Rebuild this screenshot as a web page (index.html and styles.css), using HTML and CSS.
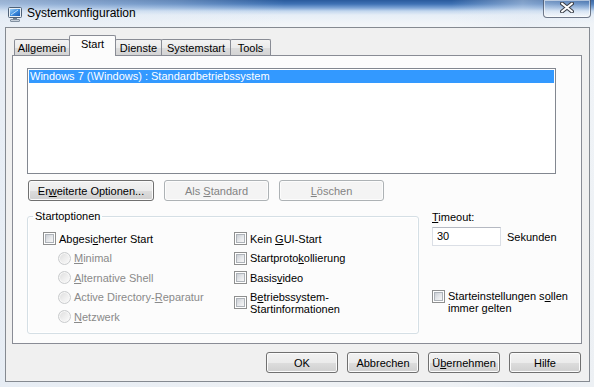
FILE: index.html
```html
<!DOCTYPE html>
<html lang="de">
<head>
  <meta charset="UTF-8">
  <title>Systemkonfiguration</title>
  <link rel="stylesheet" href="styles.css">
</head>
<body>
  <div class="window">
    <div class="titlebar">
      <svg class="app-icon" width="16" height="16" viewBox="0 0 16 16">
        <defs>
          <linearGradient id="scr" x1="0" y1="0" x2="1" y2="1">
            <stop offset="0" stop-color="#9fd0f7"/>
            <stop offset="0.5" stop-color="#3d8ee0"/>
            <stop offset="1" stop-color="#1b5bb5"/>
          </linearGradient>
        </defs>
        <rect x="1.5" y="1.5" width="13" height="10" rx="1" fill="#e8eef4" stroke="#4f6278"/>
        <rect x="3" y="3" width="10" height="7" fill="url(#scr)"/>
        <path d="M4 9 L11 4" stroke="#dff1ff" stroke-width="1" opacity="0.8"/>
        <rect x="6" y="12" width="4" height="1.5" fill="#6c7c8e"/>
        <rect x="3.5" y="13.5" width="9" height="2" rx="0.5" fill="#c9d2dc" stroke="#6c7c8e" stroke-width="0.8"/>
      </svg>
      <span class="title">Systemkonfiguration</span>
      <div class="close-btn">
        <svg width="14" height="11" viewBox="0 0 14 11">
          <path d="M2 1.5 L12 9.5 M12 1.5 L2 9.5" stroke="#3b3f47" stroke-width="4" stroke-linecap="round"/>
          <path d="M2 1.5 L12 9.5 M12 1.5 L2 9.5" stroke="#ffffff" stroke-width="2" stroke-linecap="round"/>
        </svg>
      </div>
    </div>

    <div class="client">
      <div class="tabs">
        <div class="tab tab-allgemein">Allgemein</div>
        <div class="tab tab-start active">Start</div>
        <div class="tab tab-dienste">Dienste</div>
        <div class="tab tab-systemstart">Systemstart</div>
        <div class="tab tab-tools">Tools</div>
      </div>

      <div class="panel">
        <div class="listbox">
          <div class="list-item selected">Windows 7 (\Windows) : Standardbetriebssystem</div>
        </div>

        <div class="list-buttons">
          <button class="btn btn-wide">Er<u>w</u>eiterte Optionen...</button>
          <button class="btn btn-mid" disabled>Als <u>S</u>tandard</button>
          <button class="btn btn-mid" disabled><u>L</u>öschen</button>
        </div>

        <div class="options-row">
          <fieldset class="groupbox">
            <legend>Startoptionen</legend>
            <div class="opt-grid">
              <div class="opt-col">
                <label class="opt"><span class="check"></span><span>Abgesi<u>c</u>herter Start</span></label>
                <label class="opt sub disabled"><span class="radio"></span><span><u>M</u>inimal</span></label>
                <label class="opt sub disabled"><span class="radio"></span><span><u>A</u>lternative Shell</span></label>
                <label class="opt sub disabled"><span class="radio"></span><span>Active Directory-<u>R</u>eparatur</span></label>
                <label class="opt sub disabled"><span class="radio"></span><span><u>N</u>etzwerk</span></label>
              </div>
              <div class="opt-col">
                <label class="opt"><span class="check"></span><span>Kein <u>G</u>UI-Start</span></label>
                <label class="opt"><span class="check"></span><span>Startproto<u>k</u>ollierung</span></label>
                <label class="opt"><span class="check"></span><span>Basis<u>v</u>ideo</span></label>
                <label class="opt multi"><span class="check"></span><span>B<u>e</u>triebssystem-<br>Startinformationen</span></label>
              </div>
            </div>
          </fieldset>

          <div class="timeout-col">
            <div class="timeout-label"><u>T</u>imeout:</div>
            <div class="timeout-row">
              <div class="textbox">30</div>
              <span>Sekunden</span>
            </div>
            <label class="opt persist"><span class="check"></span><span>Starteinstellungen s<u>o</u>llen<br>immer gelten</span></label>
          </div>
        </div>
      </div>

      <div class="dialog-buttons">
        <button class="btn btn-dlg">OK</button>
        <button class="btn btn-dlg">Abbrechen</button>
        <button class="btn btn-dlg">Ü<u>b</u>ernehmen</button>
        <button class="btn btn-dlg">Hilfe</button>
      </div>
    </div>
  </div>
</body>
</html>
```

FILE: styles.css
```css
body {
  margin: 0;
  width: 594px;
  height: 387px;
  overflow: hidden;
  background: #eef2f6;
  font-family: "Liberation Sans", Arial, sans-serif;
  font-size: 11px;
  color: #000;
}
.window {
  height: 387px;
  background:
    linear-gradient(to right, rgba(226,234,244,0.6) 0, rgba(226,234,244,0.3) 30%, rgba(226,234,244,0) 48%, rgba(226,234,244,0) 76%, rgba(226,234,244,0.45) 88%, rgba(226,234,244,0.1) 100%),
    linear-gradient(to bottom, #295a9c 0, #3f72b4 4px, #7fa6d6 8px, #c3d7ee 11px, #e6eef7 15px, #f2f5f8 24px, #eef1f4 100%);
}
.titlebar {
  display: flex;
  align-items: flex-start;
  height: 27px;
}
.app-icon {
  margin: 6px 0 0 7px;
}
.title {
  margin: 6px 0 0 4px;
  font-size: 12px;
  line-height: 15px;
}
.close-btn {
  margin-left: auto;
  margin-right: 3px;
  width: 48px;
  height: 18px;
  box-sizing: border-box;
  border: 1px solid rgba(70,80,100,0.75);
  border-top: none;
  border-radius: 0 0 4px 4px;
  box-shadow: inset 0 0 0 1px rgba(255,255,255,0.55);
  background: linear-gradient(to bottom, rgba(255,255,255,0.05), rgba(255,255,255,0.35));
  display: flex;
  align-items: center;
  justify-content: center;
}
.close-btn svg {
  margin-top: -2px;
}

/* Client-Bereich */
.client {
  margin: 0 4px 0 5px;
  height: 355px;
  box-sizing: border-box;
  border: 1px solid #858a91;
  background: #f0f0f0;
  padding-top: 7px;
}
.tabs {
  display: flex;
  align-items: flex-end;
  height: 20px;
  margin-left: 8px;
  position: relative;
  z-index: 1;
}
.tab {
  box-sizing: border-box;
  height: 16px;
  border: 1px solid #898c95;
  border-bottom: none;
  margin-left: -1px;
  background: linear-gradient(to bottom, #f3f3f3 0, #ebebeb 50%, #dddddd 51%, #d4d4d4 100%);
  text-align: center;
  line-height: 16px;
  border-radius: 2px 2px 0 0;
}
.tab:first-child {
  margin-left: 0;
}
.tab.active {
  height: 21px;
  margin-bottom: -1px;
  background: #fcfcfc;
  line-height: 17px;
}
.tab-allgemein { width: 56px; }
.tab-start { width: 47px; }
.tab-dienste { width: 47px; }
.tab-systemstart { width: 70px; }
.tab-tools { width: 41px; }

.panel {
  margin-left: 6px;
  width: 570px;
  height: 289px;
  box-sizing: border-box;
  border: 1px solid #898c95;
  background: #fcfcfc;
  padding-top: 12px;
}
.listbox {
  margin-left: 14px;
  width: 529px;
  height: 106px;
  box-sizing: border-box;
  border: 1px solid #828790;
  background: #fff;
  padding: 1px;
}
.list-item {
  height: 13px;
  line-height: 13px;
  padding-left: 1px;
  white-space: nowrap;
}
.list-item.selected {
  background: #3399ff;
  color: #fff;
}

/* Buttons */
.btn {
  box-sizing: border-box;
  height: 21px;
  padding: 0;
  font-family: inherit;
  font-size: 11px;
  color: #000;
  border: 1px solid #707070;
  border-radius: 3px;
  background: linear-gradient(to bottom, #f2f2f2 0, #ebebeb 50%, #dddddd 51%, #cfcfcf 100%);
  box-shadow: inset 0 0 0 1px #fbfbfb;
}
.btn:disabled {
  color: #838383;
  border-color: #adb2b5;
  background: #f4f4f4;
  box-shadow: inset 0 0 0 1px #fcfcfc;
}
.btn u {
  text-underline-offset: 1px;
}
.list-buttons {
  display: flex;
  gap: 10px;
  margin: 6px 0 0 15px;
}
.btn-wide { width: 126px; }
.btn-mid { width: 105px; }

/* Startoptionen */
.options-row {
  display: flex;
  align-items: flex-start;
  margin: 9px 0 0 14px;
}
.groupbox {
  margin: 0;
  width: 392px;
  height: 124px;
  box-sizing: border-box;
  border: 1px solid #d5dfe5;
  border-radius: 3px;
  box-shadow: inset 0 0 0 1px #ffffff;
  padding: 6px 0 0 15px;
}
.groupbox legend {
  padding: 0 2px;
  margin-left: -10px;
  line-height: 13px;
}
.opt-grid {
  display: grid;
  grid-template-columns: 191px 1fr;
}
.opt {
  display: flex;
  align-items: center;
  height: 19.5px;
  white-space: nowrap;
}
.opt.sub {
  padding-left: 15px;
}
.opt.disabled {
  color: #8a8a8a;
}
.opt u {
  text-underline-offset: 1px;
}
.check {
  flex: none;
  width: 13px;
  height: 13px;
  box-sizing: border-box;
  border: 1px solid #8e8f8f;
  background: #fff;
  margin-right: 3px;
  position: relative;
}
.check::after {
  content: "";
  position: absolute;
  left: 1px;
  top: 1px;
  width: 9px;
  height: 9px;
  box-sizing: border-box;
  border: 1px solid #aeb3b9;
  background: linear-gradient(135deg, #cbcfd5 0, #e4e6e9 50%, #f7f7f7 100%);
}
.radio {
  flex: none;
  width: 13px;
  height: 13px;
  box-sizing: border-box;
  border-radius: 50%;
  border: 1px solid #c9cbcd;
  background: linear-gradient(135deg, #dcdcdc 0, #ededed 50%, #fbfbfb 100%);
  box-shadow: inset 0 0 0 1px #f7f7f7;
  margin-right: 3px;
}
.opt.multi {
  height: auto;
  margin-top: 3px;
  line-height: 12px;
}

.timeout-col {
  margin-left: 13px;
}
.timeout-label {
  line-height: 14px;
}
.timeout-label u {
  text-underline-offset: 1px;
}
.timeout-row {
  display: flex;
  align-items: center;
  gap: 6px;
  margin-top: 3px;
}
.textbox {
  width: 69px;
  height: 19px;
  box-sizing: border-box;
  border: 1px solid #dbdfe6;
  border-top-color: #b5b9c2;
  background: #fff;
  line-height: 17px;
  padding-left: 4px;
}
.opt.persist {
  height: auto;
  align-items: flex-start;
  margin-top: 44px;
  line-height: 12px;
}

/* Dialog-Buttons */
.dialog-buttons {
  display: flex;
  justify-content: flex-end;
  gap: 9px;
  margin-top: 8px;
  padding-right: 8px;
}
.btn-dlg { width: 72px; }
```
